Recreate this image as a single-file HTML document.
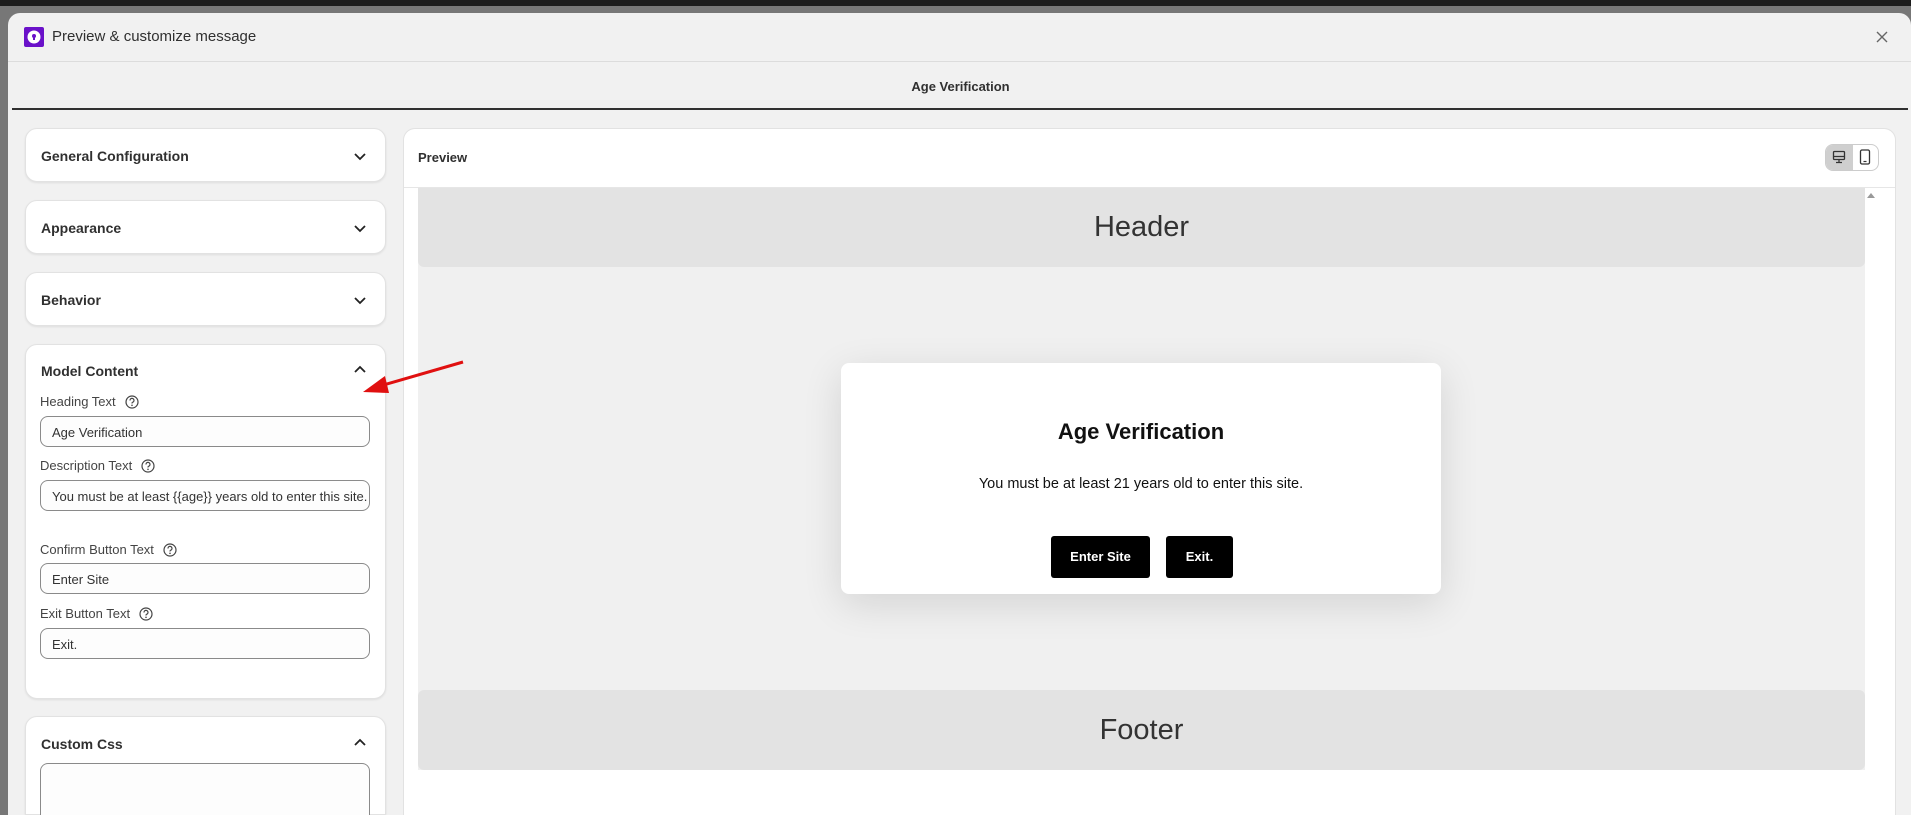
<!DOCTYPE html>
<html style="width:1911px;height:815px;overflow:hidden"><head><meta charset="utf-8"><style>
*{box-sizing:border-box;margin:0;padding:0}
body{width:1911px;height:815px;overflow:hidden;background:#777;font-family:"Liberation Sans",sans-serif;position:relative}
.top{position:absolute;left:0;top:0;width:1911px;height:6px;background:#1c1c1c}
.modal{position:absolute;left:8px;top:13px;width:1903px;height:802px;background:#f1f1f1;border-radius:12px 12px 0 0}
.abs{position:absolute}
.card{position:absolute;left:25px;width:361px;background:#fff;border:1px solid #e2e2e2;border-radius:12px;box-shadow:0 1px 2px rgba(0,0,0,.08)}
.ct{position:absolute;left:15px;font-weight:bold;font-size:14px;color:#303030}
.chev{position:absolute;right:18px;width:14px;height:14px}
.lbl{position:absolute;left:40px;font-size:13px;color:#444}
.lbl svg{vertical-align:-3px;margin-left:9px}
.inp{position:absolute;left:40px;width:330px;height:31px;border:1px solid #8a8a8a;border-radius:8px;background:#fdfdfd;font-size:13px;color:#333;padding:8px 11px;white-space:nowrap;overflow:hidden}
</style></head><body>
<div class="top"></div>
<div class="modal"></div>
<svg class="abs" style="left:24px;top:27px" width="20" height="20" viewBox="0 0 20 20"><rect width="20" height="20" rx="2" fill="#6a11c9"/><circle cx="10" cy="10" r="6.5" fill="#fff"/><circle cx="10" cy="9" r="2" fill="#6a11c9"/><rect x="9" y="9" width="2" height="4" fill="#6a11c9"/></svg>
<div class="abs" style="left:52px;top:28px;font-size:15px;color:#303030">Preview &amp; customize message</div>
<svg class="abs" style="left:1875px;top:30px" width="14" height="14" viewBox="0 0 14 14"><path d="M2 2L12 12M12 2L2 12" stroke="#666" stroke-width="1.4"/></svg>
<div class="abs" style="left:8px;top:61px;width:1903px;height:1px;background:#dcdcdc"></div>
<div class="abs" style="left:0;top:79px;width:1911px;text-align:center;font-size:13px;font-weight:bold;color:#303030;padding-left:10px">Age Verification</div>
<div class="abs" style="left:12px;top:108px;width:1896px;height:2px;background:#303030"></div>

<div class="card" style="top:128px;height:54px"><div class="ct" style="top:19px">General Configuration</div><svg class="chev" style="top:20px" viewBox="0 0 14 14"><path d="M2 5l5 5 5-5" fill="none" stroke="#222" stroke-width="1.8"/></svg></div>
<div class="card" style="top:200px;height:54px"><div class="ct" style="top:19px">Appearance</div><svg class="chev" style="top:20px" viewBox="0 0 14 14"><path d="M2 5l5 5 5-5" fill="none" stroke="#222" stroke-width="1.8"/></svg></div>
<div class="card" style="top:272px;height:54px"><div class="ct" style="top:19px">Behavior</div><svg class="chev" style="top:20px" viewBox="0 0 14 14"><path d="M2 5l5 5 5-5" fill="none" stroke="#222" stroke-width="1.8"/></svg></div>
<div class="card" style="top:344px;height:355px"><div class="ct" style="top:18px">Model Content</div><svg class="chev" style="top:17px" viewBox="0 0 14 14"><path d="M2 10l5-5 5 5" fill="none" stroke="#222" stroke-width="1.8"/></svg></div>
<div class="card" style="top:716px;height:99px;border-radius:12px 12px 0 0"><div class="ct" style="top:19px">Custom Css</div><svg class="chev" style="top:18px" viewBox="0 0 14 14"><path d="M2 10l5-5 5 5" fill="none" stroke="#222" stroke-width="1.8"/></svg></div>

<div class="lbl" style="top:394px">Heading Text<svg width="14" height="14" viewBox="0 0 14 14"><circle cx="7" cy="7" r="6" fill="none" stroke="#444" stroke-width="1.2"/><path d="M5 5.5a2 2 0 1 1 2.5 1.8c-.5.2-.5.6-.5 1.2" fill="none" stroke="#444" stroke-width="1.2"/><circle cx="7" cy="10.3" r=".8" fill="#444"/></svg></div>
<div class="inp" style="top:416px">Age Verification</div>
<div class="lbl" style="top:458px">Description Text<svg width="14" height="14" viewBox="0 0 14 14"><circle cx="7" cy="7" r="6" fill="none" stroke="#444" stroke-width="1.2"/><path d="M5 5.5a2 2 0 1 1 2.5 1.8c-.5.2-.5.6-.5 1.2" fill="none" stroke="#444" stroke-width="1.2"/><circle cx="7" cy="10.3" r=".8" fill="#444"/></svg></div>
<div class="inp" style="top:480px">You must be at least {{age}} years old to enter this site.</div>
<div class="lbl" style="top:542px">Confirm Button Text<svg width="14" height="14" viewBox="0 0 14 14"><circle cx="7" cy="7" r="6" fill="none" stroke="#444" stroke-width="1.2"/><path d="M5 5.5a2 2 0 1 1 2.5 1.8c-.5.2-.5.6-.5 1.2" fill="none" stroke="#444" stroke-width="1.2"/><circle cx="7" cy="10.3" r=".8" fill="#444"/></svg></div>
<div class="inp" style="top:563px">Enter Site</div>
<div class="lbl" style="top:606px">Exit Button Text<svg width="14" height="14" viewBox="0 0 14 14"><circle cx="7" cy="7" r="6" fill="none" stroke="#444" stroke-width="1.2"/><path d="M5 5.5a2 2 0 1 1 2.5 1.8c-.5.2-.5.6-.5 1.2" fill="none" stroke="#444" stroke-width="1.2"/><circle cx="7" cy="10.3" r=".8" fill="#444"/></svg></div>
<div class="inp" style="top:628px">Exit.</div>
<div class="inp" style="top:763px;height:52px;border-bottom:none;border-radius:8px 8px 0 0"></div>

<div class="abs" style="left:403px;top:128px;width:1493px;height:687px;background:#fff;border:1px solid #e2e2e2;border-bottom:none;border-radius:12px 12px 0 0"></div>
<div class="abs" style="left:418px;top:150px;font-size:13px;font-weight:bold;color:#303030">Preview</div>
<div class="abs" style="left:1825px;top:144px;width:54px;height:27px;border:1px solid #ccc;border-radius:8px;overflow:hidden;background:#fff"><div style="width:27px;height:27px;background:#cfcfcf"></div></div>
<svg class="abs" style="left:1832px;top:150px" width="14" height="14" viewBox="0 0 14 14"><rect x="1.5" y="1.5" width="11" height="8" rx="1" fill="none" stroke="#333" stroke-width="1.3"/><path d="M1.5 6.5h11M7 9.5v2.5M4 12.5h6" stroke="#333" stroke-width="1.3"/></svg>
<svg class="abs" style="left:1859px;top:149px" width="12" height="16" viewBox="0 0 12 16"><rect x="1.5" y="1" width="9" height="14" rx="1.5" fill="none" stroke="#333" stroke-width="1.3"/><path d="M4.5 12.5h3" stroke="#333" stroke-width="1.2"/></svg>
<div class="abs" style="left:404px;top:187px;width:1491px;height:1px;background:#e6e6e6"></div>
<div class="abs" style="left:418px;top:188px;width:1447px;height:582px;background:#f0f0f0"></div>
<div class="abs" style="left:418px;top:188px;width:1447px;height:79px;background:#e3e3e3;border-radius:0 0 6px 6px;text-align:center;font-size:29px;color:#333;line-height:79px">Header</div>
<div class="abs" style="left:418px;top:690px;width:1447px;height:80px;background:#e3e3e3;border-radius:6px;text-align:center;font-size:29px;color:#333;line-height:80px">Footer</div>
<svg class="abs" style="left:1866px;top:192px" width="10" height="8" viewBox="0 0 10 8"><path d="M1 6L5 1L9 6Z" fill="#999"/></svg>
<div class="abs" style="left:841px;top:363px;width:600px;height:231px;background:#fff;border-radius:8px;box-shadow:0 10px 40px rgba(0,0,0,.12)">
<div style="position:absolute;top:56px;width:100%;text-align:center;font-size:22px;font-weight:bold;color:#111">Age Verification</div>
<div style="position:absolute;top:113px;width:100%;text-align:center;font-size:14.5px;color:#111">You must be at least 21 years old to enter this site.</div>
<div style="position:absolute;left:210px;top:173px;width:99px;height:42px;background:#000;border-radius:3px;color:#fff;font-weight:bold;font-size:13px;text-align:center;line-height:42px">Enter Site</div>
<div style="position:absolute;left:325px;top:173px;width:67px;height:42px;background:#000;border-radius:3px;color:#fff;font-weight:bold;font-size:13px;text-align:center;line-height:42px">Exit.</div>
</div>
<svg class="abs" style="left:355px;top:355px" width="115" height="45" viewBox="0 0 115 45"><path d="M108 7L25 31" stroke="#e01010" stroke-width="3"/><path d="M8 37L30 21L34 38Z" fill="#e01010"/></svg>
</body></html>
